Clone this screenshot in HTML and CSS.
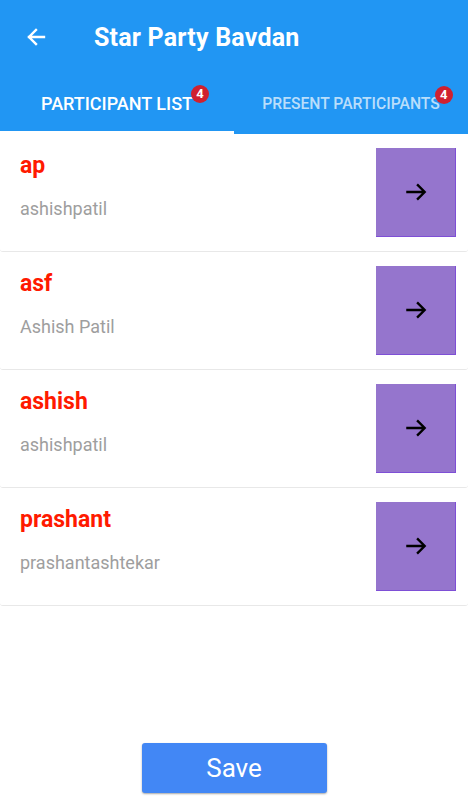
FILE: index.html
```html
<!DOCTYPE html>
<html>

<head>
  <title>Star Party Bavdan</title>
  <link rel="stylesheet" href="styles.css">
</head>

<body>
  <div class="app">
    <header class="appbar">
      <div class="toolbar">
        <svg class="back" width="24" height="24" viewBox="0 0 24 24">
          <path d="M20 12H5M12 5l-7 7 7 7" fill="none" stroke="#fff" stroke-width="2.4" stroke-linecap="square"/>
        </svg>
        <h1>Star Party Bavdan</h1>
      </div>
      <nav class="tabs">
        <div class="tab active"><span class="label">PARTICIPANT LIST<span class="badge">4</span></span></div>
        <div class="tab"><span class="label">PRESENT PARTICIPANTS<span class="badge">4</span></span></div>
      </nav>
    </header>

    <ul class="list">
      <li class="card">
        <div class="info">
          <div class="name">ap</div>
          <div class="user">ashishpatil</div>
        </div>
        <button class="go"><svg width="26" height="26" viewBox="0 0 24 24"><path d="M3 12h17M13 5l7 7-7 7" fill="none" stroke="#000" stroke-width="2.2"/></svg></button>
      </li>
      <li class="card">
        <div class="info">
          <div class="name">asf</div>
          <div class="user">Ashish Patil</div>
        </div>
        <button class="go"><svg width="26" height="26" viewBox="0 0 24 24"><path d="M3 12h17M13 5l7 7-7 7" fill="none" stroke="#000" stroke-width="2.2"/></svg></button>
      </li>
      <li class="card">
        <div class="info">
          <div class="name">ashish</div>
          <div class="user">ashishpatil</div>
        </div>
        <button class="go"><svg width="26" height="26" viewBox="0 0 24 24"><path d="M3 12h17M13 5l7 7-7 7" fill="none" stroke="#000" stroke-width="2.2"/></svg></button>
      </li>
      <li class="card">
        <div class="info">
          <div class="name">prashant</div>
          <div class="user">prashantashtekar</div>
        </div>
        <button class="go"><svg width="26" height="26" viewBox="0 0 24 24"><path d="M3 12h17M13 5l7 7-7 7" fill="none" stroke="#000" stroke-width="2.2"/></svg></button>
      </li>
    </ul>

    <div class="footer">
      <button class="save">Save</button>
    </div>
  </div>
</body>

</html>
```

FILE: styles.css
```css
body {
  margin: 0;
  font-family: Roboto, "Noto Sans", Arial, sans-serif;
  background: #fff;
}

.app {
  display: flex;
  flex-direction: column;
  min-height: 100vh;
}

.appbar {
  background-color: #2196f3;
  color: #fff;
}

.toolbar {
  display: flex;
  align-items: center;
  height: 74px;
  padding-left: 24px;
}

.toolbar .back {
  margin-right: 46px;
}

.toolbar h1 {
  margin: 0;
  font-size: 25px;
  font-weight: 700;
  letter-spacing: 0.2px;
}

.tabs {
  display: flex;
  height: 60px;
}

.tab {
  flex: 1;
  display: flex;
  align-items: center;
  justify-content: center;
  padding-top: 1px;
  box-sizing: border-box;
  font-size: 15.7px;
  font-weight: 500;
  color: rgba(255, 255, 255, 0.7);
  border-bottom: 3px solid transparent;
}

.tab.active {
  color: #fff;
  font-size: 18px;
  border-bottom-color: #fff;
}

.label {
  position: relative;
}

.badge {
  position: absolute;
  top: -8px;
  right: -13px;
  width: 18px;
  height: 18px;
  border-radius: 50%;
  background: #d0202f;
  color: #fff;
  font-size: 13px;
  font-weight: 700;
  line-height: 18px;
  text-align: center;
}

.tab.active .badge {
  right: -16px;
}

.list {
  list-style: none;
  margin: 0;
  padding: 0;
}

.card {
  display: flex;
  align-items: flex-start;
  height: 117px;
  padding: 0 12px 0 20px;
  border-bottom: 1px solid #e8e8e8;
  border-radius: 3px;
}

.info {
  flex: 1;
  padding-top: 18px;
}

.name {
  color: #ff1a00;
  font-size: 23px;
  font-weight: 700;
  margin-bottom: 19px;
}

.user {
  color: #9e9e9e;
  font-size: 18px;
}

.go {
  width: 80px;
  height: 89px;
  margin-top: 14px;
  display: flex;
  align-items: center;
  justify-content: center;
  background: #9575cd;
  border: none;
  border-right: 1px solid #7e4fd6;
  border-bottom: 1px solid #7e4fd6;
  padding: 0;
}

.footer {
  margin-top: auto;
  display: flex;
  justify-content: center;
  padding-bottom: 7px;
}

.save {
  width: 185px;
  height: 50px;
  background: #4287f5;
  color: #fff;
  border: none;
  border-radius: 3px;
  font-family: Roboto, Arial, sans-serif;
  font-size: 26px;
  box-shadow: 0 1px 2px rgba(0, 0, 0, 0.35);
}
```
